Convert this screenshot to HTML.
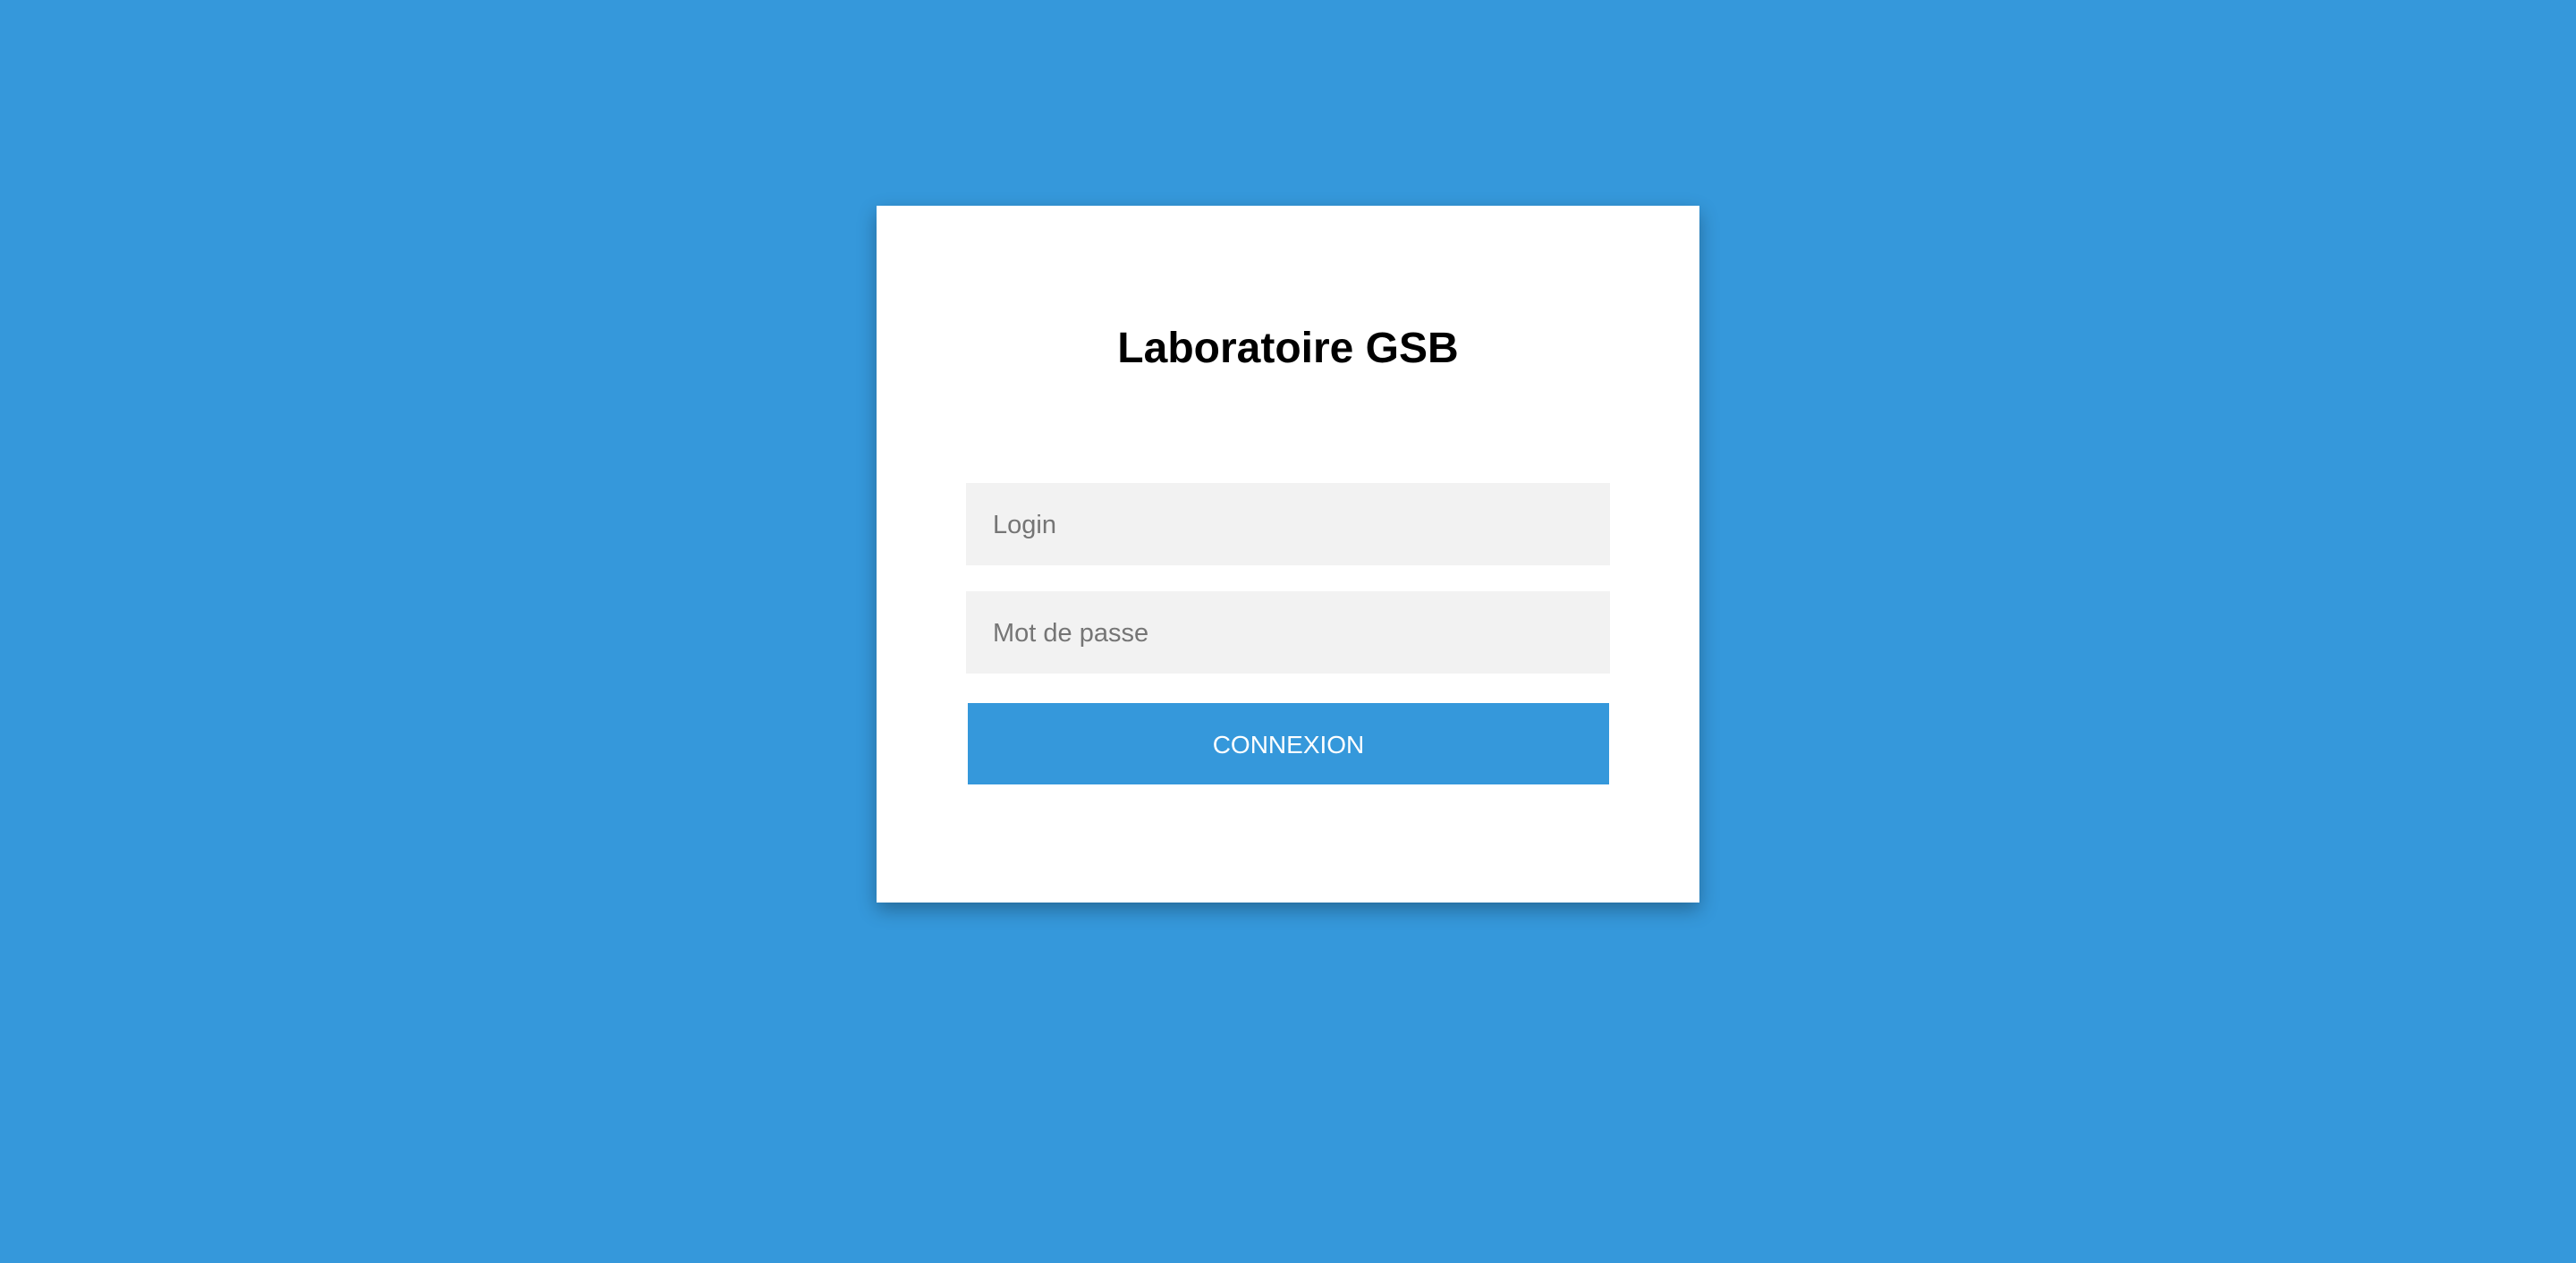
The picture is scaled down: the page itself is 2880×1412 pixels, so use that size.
<!DOCTYPE html>
<html><head><meta charset="utf-8"><style>
html,body{margin:0;padding:0;width:2880px;height:1412px;background:#3598db;font-family:"Liberation Sans",Arial,sans-serif;overflow:hidden}
.card{position:absolute;left:980px;top:230px;width:920px;height:779px;background:#fff;box-shadow:0 8px 20px rgba(0,0,0,0.3)}
h1{position:absolute;left:0;width:100%;top:360px;margin:0;text-align:center;font-size:48px;font-weight:bold;color:#000;line-height:60px}
.in{position:absolute;left:1080px;width:720px;height:92px;background:#f2f2f2;color:#757575;font-size:29px;line-height:94px;box-sizing:border-box;padding-left:30px}
.btn{position:absolute;left:1082px;top:786px;width:717px;height:91px;background:#3598db;color:#fff;font-size:28px;line-height:93px;text-align:center}
</style></head><body>
<div class="card"></div>
<h1>Laboratoire GSB</h1>
<div class="in" style="top:540px">Login</div>
<div class="in" style="top:661px">Mot de passe</div>
<div class="btn">CONNEXION</div>
</body></html>
